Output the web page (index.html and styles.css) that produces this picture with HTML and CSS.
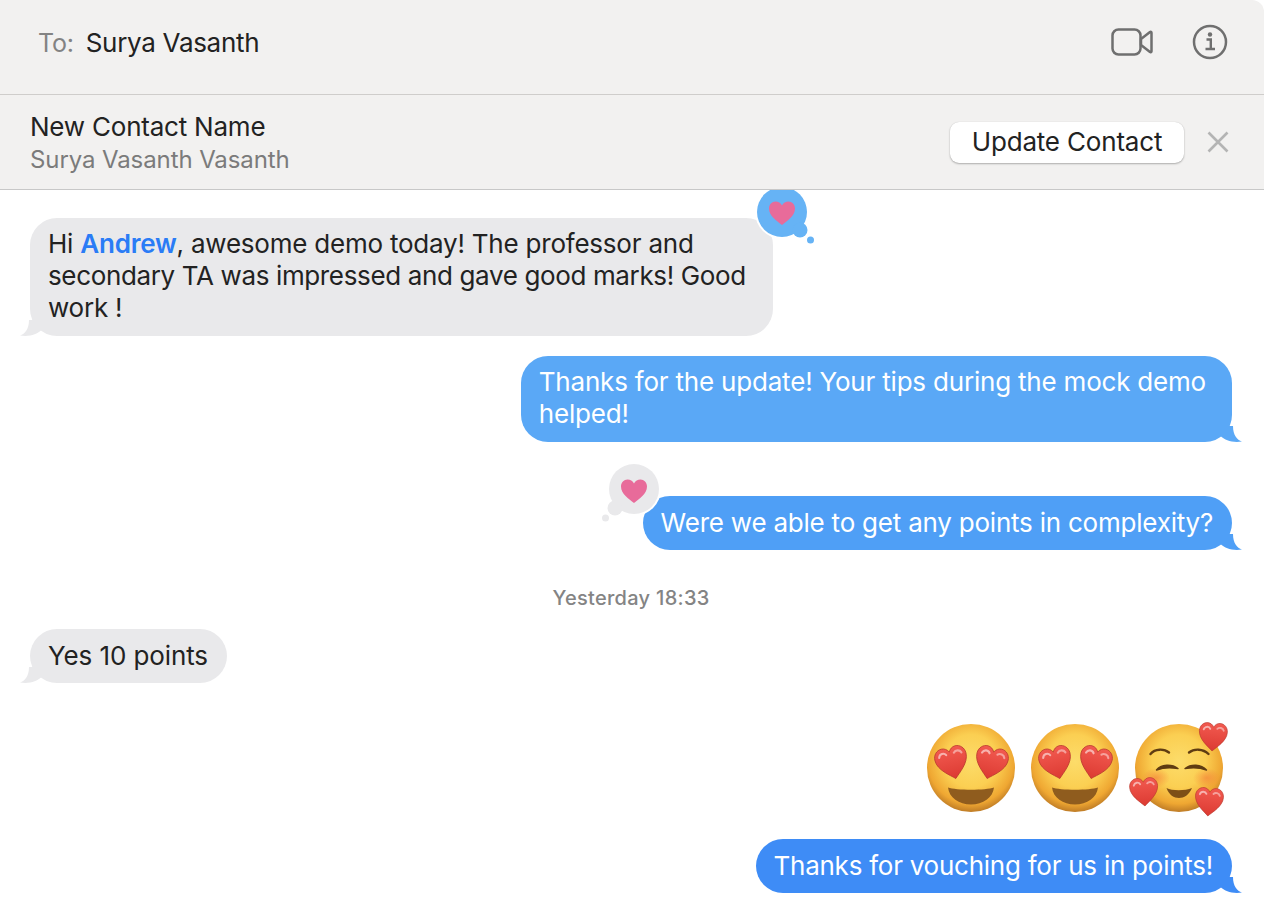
FILE: index.html
```html
<!DOCTYPE html>
<html lang="en">
<head>
<meta charset="utf-8">
<title>Messages</title>
<link rel="stylesheet" href="styles.css">
</head>
<body>
<svg class="defs" width="0" height="0" aria-hidden="true">
  <defs>
    <radialGradient id="faceGrad" cx="50%" cy="42%" r="58%">
      <stop offset="0%" stop-color="#fcdc6a"/>
      <stop offset="52%" stop-color="#fbcf52"/>
      <stop offset="84%" stop-color="#efa732"/>
      <stop offset="100%" stop-color="#bf7c26"/>
    </radialGradient>
    <linearGradient id="heartGrad" x1="0" y1="0" x2="0" y2="1">
      <stop offset="0%" stop-color="#f25a50"/>
      <stop offset="100%" stop-color="#dc3a32"/>
    </linearGradient>
    <radialGradient id="blush" cx="50%" cy="50%" r="50%">
      <stop offset="0%" stop-color="#f58a3c" stop-opacity=".75"/>
      <stop offset="100%" stop-color="#f58a3c" stop-opacity="0"/>
    </radialGradient>
    <symbol id="redHeart" viewBox="0 0 30 30" overflow="visible">
      <path d="M15 30C10.500 25.500 0 18.500 0 9C0 3.800 3.800 0 8.300 0C11.200 0 13.800 1.800 15 4.500C16.200 1.800 18.800 0 21.700 0C26.200 0 30 3.800 30 9C30 18.500 19.500 25.500 15 30Z" fill="url(#heartGrad)" stroke="#b93a2e" stroke-width=".7"/>
      <path d="M4.500 7.500C5.500 4 10 3.500 11.500 6.500" fill="none" stroke="#fff" stroke-opacity=".55" stroke-width="2" stroke-linecap="round"/>
      <path d="M19 6C21 3.800 25 4.500 26 7.500" fill="none" stroke="#fff" stroke-opacity=".45" stroke-width="2" stroke-linecap="round"/>
    </symbol>
    <symbol id="eyesFace" viewBox="0 0 96 96" overflow="visible">
      <circle cx="48" cy="48" r="44" fill="url(#faceGrad)"/>
      <path d="M25 67.500C33 70.500 63 70.500 71 67.500C70 77.500 60 84.500 48 84.500C36 84.500 26 77.500 25 67.500Z" fill="#8f5c1e"/>
      <use href="#redHeart" x="13" y="27" width="32" height="32" transform="rotate(-14 29 43)"/>
      <use href="#redHeart" x="52" y="27" width="32" height="32" transform="rotate(14 68 43)"/>
    </symbol>
  </defs>
</svg>

<header class="to-bar">
  <div class="recipient"><span class="to-label">To:</span><span class="to-name">Surya Vasanth</span></div>
  <div class="to-actions">
    <svg class="video-icon" viewBox="0 0 42 30" width="42" height="30" aria-hidden="true">
      <rect x="1.500" y="2.500" width="28" height="25" rx="6" fill="none" stroke="#6f6f6f" stroke-width="2.500"/>
      <path d="M30 12L39 5C39.600 4.600 40.500 5 40.500 5.800V24.200C40.500 25 39.600 25.400 39 25L30 18Z" fill="none" stroke="#6f6f6f" stroke-width="2.500" stroke-linejoin="round"/>
    </svg>
    <svg class="info-icon" viewBox="0 0 36 36" width="36" height="36" aria-hidden="true">
      <circle cx="18" cy="18" r="16" fill="none" stroke="#6f6f6f" stroke-width="2.500"/>
      <circle cx="18" cy="10.500" r="2.200" fill="#6f6f6f"/>
      <path d="M14.500 15.500H18.800V24.500M13.500 25H23" fill="none" stroke="#6f6f6f" stroke-width="2.400"/>
    </svg>
  </div>
</header>

<section class="contact-bar">
  <div class="contact-text">
    <div class="contact-title">New Contact Name</div>
    <div class="contact-sub">Surya Vasanth Vasanth</div>
  </div>
  <div class="contact-actions">
    <button class="update-btn" type="button">Update Contact</button>
    <svg class="close-icon" viewBox="0 0 22 22" width="22" height="22" aria-hidden="true">
      <path d="M1.500 1.500L20.500 20.500M20.500 1.500L1.500 20.500" stroke="#b4b4b4" stroke-width="2.600" fill="none"/>
    </svg>
  </div>
</section>

<main class="thread">
  <div class="row row-in">
    <div class="bubble in multi wide">
      Hi <span class="mention">Andrew</span>, awesome demo today! The professor and<br><span class="line-tight">secondary TA was impressed and gave good marks! Good</span><br>work !
      <svg class="tail tail-in" viewBox="0 0 24 17" width="24" height="17" aria-hidden="true"><path d="M3 10.500C7 14 14 17 24 15.500C19 14 15 9 15 0H3Z" fill="#e9e9eb"/></svg>
      <svg class="tapback tapback-blue" viewBox="0 0 70 66" width="70" height="66" aria-hidden="true">
        <circle cx="32" cy="27" r="27" fill="#fff"/>
        <circle cx="50" cy="45" r="9" fill="#fff"/>
        <circle cx="32" cy="27" r="25" fill="#66b3f5"/>
        <circle cx="50" cy="45" r="7.500" fill="#66b3f5"/>
        <circle cx="60.500" cy="55" r="3.500" fill="#66b3f5"/>
        <path d="M32 40C27 36 19 31 19 23.500C19 19.500 22 16.500 25.500 16.500C28.200 16.500 30.800 18 32 20.500C33.200 18 35.800 16.500 38.500 16.500C42 16.500 45 19.500 45 23.500C45 31 37 36 32 40Z" fill="#e86b9a"/>
      </svg>
    </div>
  </div>

  <div class="row row-out gap-20">
    <div class="bubble out blue-1 multi">
      Thanks for the update! Your tips during the mock demo<br>helped!
      <svg class="tail tail-out" viewBox="0 0 24 17" width="24" height="17" aria-hidden="true"><path d="M3 10.500C7 14 14 17 24 15.500C19 14 15 9 15 0H3Z" fill="#5aa8f6"/></svg>
    </div>
  </div>

  <div class="row row-out gap-54">
    <div class="bubble out blue-2">
      Were we able to get any points in complexity?
      <svg class="tail tail-out" viewBox="0 0 24 17" width="24" height="17" aria-hidden="true"><path d="M3 10.500C7 14 14 17 24 15.500C19 14 15 9 15 0H3Z" fill="#4f9ff6"/></svg>
      <svg class="tapback tapback-gray" viewBox="0 0 70 66" width="70" height="66" aria-hidden="true">
        <circle cx="38" cy="27" r="27" fill="#fff"/>
        <circle cx="19" cy="46" r="9" fill="#fff"/>
        <circle cx="38" cy="27" r="25" fill="#e9e9eb"/>
        <circle cx="19" cy="46" r="7.500" fill="#e9e9eb"/>
        <circle cx="9.500" cy="56" r="3.500" fill="#e9e9eb"/>
        <path d="M38 41C33 37 25 32 25 24.500C25 20.500 28 17.500 31.500 17.500C34.200 17.500 36.800 19 38 21.500C39.200 19 41.800 17.500 44.500 17.500C48 17.500 51 20.500 51 24.500C51 32 43 37 38 41Z" fill="#e86b9a"/>
      </svg>
    </div>
  </div>

  <div class="timestamp">Yesterday 18:33</div>

  <div class="row row-in gap-18">
    <div class="bubble in loose">
      Yes 10 points
      <svg class="tail tail-in" viewBox="0 0 24 17" width="24" height="17" aria-hidden="true"><path d="M3 10.500C7 14 14 17 24 15.500C19 14 15 9 15 0H3Z" fill="#e9e9eb"/></svg>
    </div>
  </div>

  <div class="emoji-row">
    <svg class="emoji" viewBox="0 0 96 96" width="96" height="96" role="img" aria-label="smiling face with heart eyes"><use href="#eyesFace" width="96" height="96"/></svg>
    <svg class="emoji" viewBox="0 0 96 96" width="96" height="96" role="img" aria-label="smiling face with heart eyes"><use href="#eyesFace" width="96" height="96"/></svg>
    <svg class="emoji" viewBox="0 0 96 96" width="96" height="96" role="img" aria-label="smiling face with hearts">
      <circle cx="48" cy="48" r="44" fill="url(#faceGrad)"/>
      <ellipse cx="25" cy="58" rx="14" ry="10" fill="url(#blush)"/>
      <ellipse cx="76" cy="58" rx="14" ry="10" fill="url(#blush)"/>
      <g fill="none" stroke="#5f3c12" stroke-linecap="round">
        <path d="M19.500 34C24 28.500 33 28.500 38 32.500" stroke-width="2.400"/>
        <path d="M58 32.500C63 28.500 72 28.500 77.500 34" stroke-width="2.400"/>
      </g>
      <path d="M25.500 50C30 44 41 44 47 48.500C41 47.500 32 47.500 25.500 50Z" fill="#5f3c12" stroke="#5f3c12" stroke-width="1.400" stroke-linejoin="round"/>
      <path d="M54 48.500C60 44 70 44 75.500 50C69 47.500 60 47.500 54 48.500Z" fill="#5f3c12" stroke="#5f3c12" stroke-width="1.400" stroke-linejoin="round"/>
      <path d="M35.500 68C41 71 54 71 61 68C58 75 53 78 48 78C43 78 38 75 35.500 68Z" fill="#7d4f17"/>
      <use href="#redHeart" x="68" y="3" width="28" height="28" transform="rotate(4 82 17)"/>
      <use href="#redHeart" x="-1" y="58" width="28" height="28" transform="rotate(-4 13 72)"/>
      <use href="#redHeart" x="64" y="68" width="28" height="28" transform="rotate(5 78 82)"/>
    </svg>
  </div>

  <div class="row row-out gap-23">
    <div class="bubble out blue-3">
      Thanks for vouching for us in points!
      <svg class="tail tail-out" viewBox="0 0 24 17" width="24" height="17" aria-hidden="true"><path d="M3 10.500C7 14 14 17 24 15.500C19 14 15 9 15 0H3Z" fill="#3e8cf6"/></svg>
    </div>
  </div>
</main>
</body>
</html>
```
FILE: styles.css
```css
html, body {
  margin: 0;
  height: 100%;
}
body {
  width: 1264px;
  height: 906px;
  overflow: hidden;
  display: flex;
  flex-direction: column;
  background: #fff;
  color: #222;
  font-family: Inter, "Noto Sans", "Liberation Sans", sans-serif;
  font-size: 26px;
  letter-spacing: -0.22px;
}
.defs {
  position: absolute;
}
.to-bar {
  height: 95px;
  flex: none;
  box-sizing: border-box;
  display: flex;
  align-items: center;
  justify-content: space-between;
  padding: 0 36px 10px 38px;
  background: #f2f1f0;
  border-bottom: 1px solid #cfcdcb;
  border-top-right-radius: 12px;
}
.recipient {
  display: flex;
  gap: 12px;
  align-items: baseline;
}
.to-label {
  color: #838383;
  font-size: 25px;
}
.to-name {
  letter-spacing: -0.3px;
}
.to-actions {
  display: flex;
  align-items: center;
  gap: 39px;
}
.video-icon, .info-icon, .close-icon {
  display: block;
}
.contact-bar {
  height: 95px;
  flex: none;
  box-sizing: border-box;
  display: flex;
  align-items: center;
  justify-content: space-between;
  padding: 0 35px 0 30px;
  background: #f2f1f0;
  border-bottom: 1px solid #c8c8c8;
}
.contact-text {
  line-height: 33px;
  margin-top: 2px;
}
.contact-sub {
  color: #7b7b7b;
  font-size: 24px;
  letter-spacing: -0.1px;
}
.contact-actions {
  display: flex;
  align-items: center;
  gap: 23px;
}
.update-btn {
  width: 234px;
  height: 41px;
  padding: 0 0 2px;
  border: 0;
  border-radius: 9px;
  background: #fff;
  color: #222;
  font: inherit;
  letter-spacing: -0.18px;
  box-shadow: 0 1px 2px rgba(0, 0, 0, .28), 0 0 1px rgba(0, 0, 0, .15);
}
.thread {
  flex: 1;
  overflow: hidden;
  display: flex;
  flex-direction: column;
  padding: 28px 32px 0 30px;
}
.row {
  display: flex;
  flex: none;
}
.row-out {
  justify-content: flex-end;
}
.gap-20 { margin-top: 20px; }
.gap-54 { margin-top: 54px; }
.gap-18 { margin-top: 18px; }
.gap-23 { margin-top: 23px; }
.bubble {
  position: relative;
  padding: 11px 19px 11px 18px;
  border-radius: 27px;
  line-height: 32px;
  white-space: nowrap;
}
.multi {
  padding: 10px 26px 12px 18px;
}
.wide {
  padding-right: 27px;
}
.in {
  background: #e9e9eb;
}
.out {
  color: #fff;
}
.loose {
  letter-spacing: -0.1px;
}
.line-tight {
  letter-spacing: -0.36px;
}
.blue-1 { background: #5aa8f6; letter-spacing: -0.2px; }
.blue-2 { background: #4f9ff6; }
.blue-3 { background: #3e8cf6; letter-spacing: -0.25px; }
.mention {
  color: #2a7cf6;
  font-weight: 600;
}
.tail {
  position: absolute;
  bottom: -1px;
  display: block;
}
.tail-out {
  right: -10px;
}
.tail-in {
  left: -10px;
  transform: scaleX(-1);
}
.tapback {
  position: absolute;
  display: block;
}
.tapback-blue {
  right: -47px;
  top: -33px;
}
.tapback-gray {
  left: -47px;
  top: -34px;
}
.timestamp {
  flex: none;
  margin-top: 35px;
  text-align: center;
  font-size: 20px;
  font-weight: 500;
  line-height: 26px;
  color: #848484;
  letter-spacing: 0.3px;
}
.emoji-row {
  flex: none;
  display: flex;
  justify-content: flex-end;
  gap: 8px;
  margin-top: 37px;
  padding-right: 5px;
}
.emoji {
  display: block;
  overflow: visible;
}
```
